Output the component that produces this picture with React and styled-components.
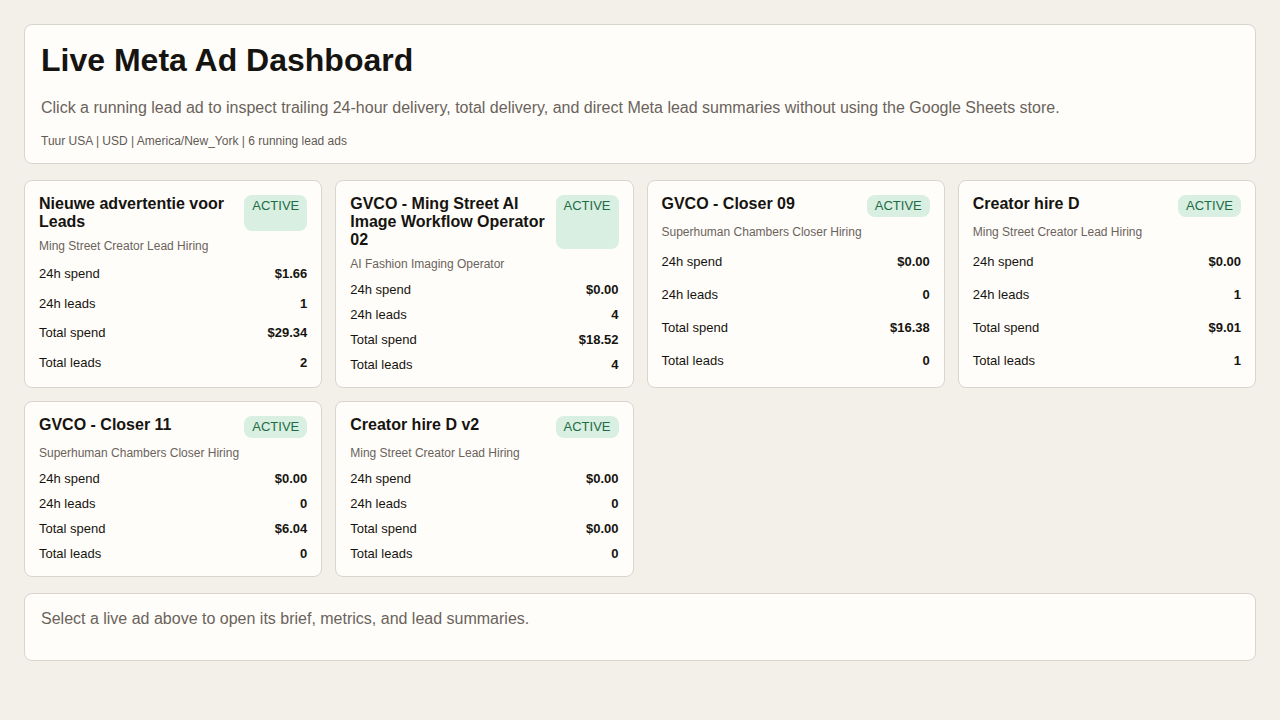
import React from "react";
import styled, { createGlobalStyle } from "styled-components";

const Global = createGlobalStyle`
  body { margin: 0; background: #f3f0ea; font-family: "Liberation Sans", Arial, sans-serif; color: #161410; }
  * { box-sizing: border-box; }
`;
const Page = styled.div`padding: 24px; display: flex; flex-direction: column; gap: 16px;`;
const Panel = styled.section`
  background: #fffdf9; border: 1px solid #d9d4cc; border-radius: 8px; padding: 16px 16px 15px;
`;
const Title = styled.h1`margin: 0 0 20px; font-size: 32px; line-height: 38px; font-weight: 700;`;
const Lead = styled.p`margin: 0 0 17px; font-size: 16px; color: #6a635c;`;
const Meta = styled.div`font-size: 12px; color: #5f5a55;`;
const Grid = styled.div`display: grid; grid-template-columns: repeat(4, 1fr); gap: 13px;`;
const Card = styled.div`
  background: #fffdf9; border: 1px solid #d9d4cc; border-radius: 8px; padding: 14px 14px 10px;
  display: flex; flex-direction: column;
`;
const Head = styled.div`display: flex; gap: 10px; justify-content: space-between; margin-bottom: 8px;`;
const Name = styled.div`font-size: 16px; font-weight: 700; line-height: 18px;`;
const Badge = styled.span`
  flex: none; background: #d8efe2; color: #1f6b45; border-radius: 8px; font-size: 13px;
  line-height: 14px; padding: 4px 8px;
`;
const Sub = styled.div`font-size: 12px; line-height: 14px; color: #6a635c; margin-bottom: 6px;`;
const Rows = styled.div`flex: 1; display: flex; flex-direction: column;`;
const Row = styled.div`flex: 1; min-height: 25px; display: flex; align-items: center; justify-content: space-between; font-size: 13px;`;
const Val = styled.b`font-weight: 700;`;
const Empty = styled(Panel)`padding: 16px 16px 32px; font-size: 16px; color: #6a635c;`;

const ads = [
  ["Nieuwe advertentie voor Leads", "Ming Street Creator Lead Hiring", "$1.66", "1", "$29.34", "2"],
  ["GVCO - Ming Street AI Image Workflow Operator 02", "AI Fashion Imaging Operator", "$0.00", "4", "$18.52", "4"],
  ["GVCO - Closer 09", "Superhuman Chambers Closer Hiring", "$0.00", "0", "$16.38", "0"],
  ["Creator hire D", "Ming Street Creator Lead Hiring", "$0.00", "1", "$9.01", "1"],
  ["GVCO - Closer 11", "Superhuman Chambers Closer Hiring", "$0.00", "0", "$6.04", "0"],
  ["Creator hire D v2", "Ming Street Creator Lead Hiring", "$0.00", "0", "$0.00", "0"],
];
const labels = ["24h spend", "24h leads", "Total spend", "Total leads"];

export default function App() {
  return (
    <Page>
      <Global />
      <Panel>
        <Title>Live Meta Ad Dashboard</Title>
        <Lead>Click a running lead ad to inspect trailing 24-hour delivery, total delivery, and direct Meta lead summaries without using the Google Sheets store.</Lead>
        <Meta>Tuur USA | USD | America/New_York | 6 running lead ads</Meta>
      </Panel>
      <Grid>
        {ads.map(([n, s, ...v]) => (
          <Card key={n}>
            <Head><Name>{n}</Name><Badge>ACTIVE</Badge></Head>
            <Sub>{s}</Sub>
            <Rows>
              {labels.map((l, i) => <Row key={l}><span>{l}</span><Val>{v[i]}</Val></Row>)}
            </Rows>
          </Card>
        ))}
      </Grid>
      <Empty>Select a live ad above to open its brief, metrics, and lead summaries.</Empty>
    </Page>
  );
}
